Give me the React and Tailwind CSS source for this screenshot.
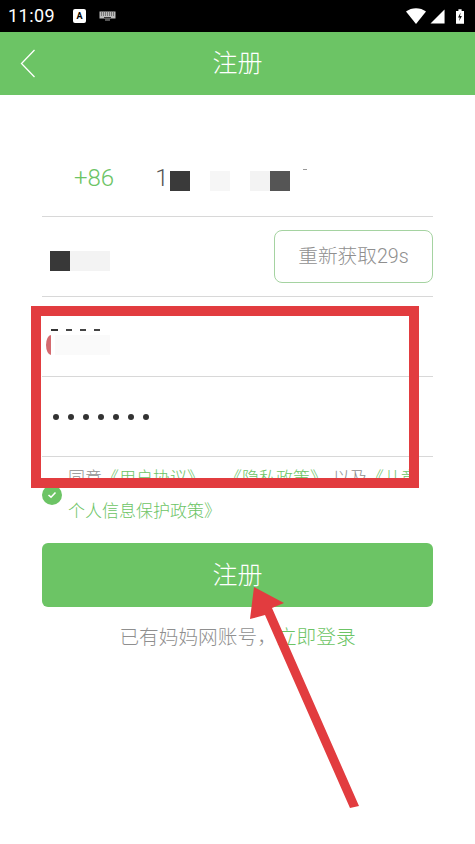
import React from "react";

const cjk = { fontFamily: '"Roboto", "Noto Sans CJK SC", sans-serif' };

function StatusBar() {
  return (
    <div className="flex h-8 items-center bg-black pl-2 pr-2 text-white">
      <span className="text-[18px] leading-none tracking-wide">11:09</span>
      <div className="ml-[18px] flex h-[14px] w-[13px] items-center justify-center rounded-[2px] bg-white text-[9px] font-bold leading-none text-black">
        A
      </div>
      <svg className="ml-[13px]" width="17" height="10" viewBox="0 0 17 10">
        <rect x="0.5" y="0.5" width="16" height="7" fill="#bbb" />
        <path d="M2 2h13M2 4h13" stroke="#333" strokeWidth="1" strokeDasharray="1 1" />
        <rect x="5" y="6" width="7" height="1" fill="#333" />
        <rect x="6" y="8.5" width="5" height="1" fill="#aaa" />
      </svg>
      <div className="ml-auto flex items-center">
        <svg width="20" height="16" viewBox="0 0 22 16" preserveAspectRatio="none">
          <path d="M0 3.5C6 -1 16 -1 22 3.5L11 16z" fill="#fff" />
        </svg>
        <svg className="ml-[4px]" width="15" height="15" viewBox="0 0 16 16">
          <path d="M15.5 0.5V15.5H0.5z" fill="#fff" />
        </svg>
        <svg className="ml-[11px] mr-[3px]" width="8" height="17" viewBox="0 0 10 18">
          <path d="M3 0h4v2h3v16H0V2h3z" fill="#fff" />
          <path d="M5.8 4L2.5 10.2h2.2L3.8 15l3.6-6.6H5z" fill="#111" />
        </svg>
      </div>
    </div>
  );
}

function Header() {
  return (
    <div className="relative flex h-[63px] items-center justify-center bg-[#6cc465] text-white">
      <svg className="absolute left-[20px] top-[17px]" width="16" height="29" viewBox="0 0 16 29" fill="none">
        <path d="M14.5 1L1.5 14.5L14.5 28" stroke="#fff" strokeWidth="1.3" />
      </svg>
      <span className="text-[25px] font-light leading-none">注册</span>
    </div>
  );
}

function Blur({ w, color, className = "" }) {
  return <div className={`h-5 ${className}`} style={{ width: w, background: color }} />;
}

export default function App() {
  return (
    <div className="relative h-[844px] w-[475px] overflow-hidden bg-white" style={cjk}>
      <StatusBar />
      <Header />

      <div className="px-[42px] pt-[42px]">
        {/* phone */}
        <div className="flex h-[80px] items-center border-b border-[#d8d8d8]">
          <span className="ml-[32px] mt-[2px] text-[24px] font-light leading-none text-[#6cc465]">+86</span>
          <span className="ml-[41px] mt-[2px] w-[15px] text-[24px] font-light leading-none text-[#555]">1</span>
          <Blur w={20} color="#3a3a3a" className="mt-2" />
          <Blur w={20} color="#ffffff" className="mt-2" />
          <Blur w={20} color="#f6f6f6" className="mt-2" />
          <Blur w={20} color="#ffffff" className="mt-2" />
          <Blur w={20} color="#f3f3f3" className="mt-2" />
          <Blur w={20} color="#555555" className="mt-2" />
          <div className="mb-[14px] ml-[13px] h-px w-1 bg-[#999]" />
        </div>

        {/* sms code */}
        <div className="flex h-[80px] items-center border-b border-[#d8d8d8]">
          <Blur w={20} color="#383838" className="ml-2 mt-2" />
          <Blur w={40} color="#f3f3f3" className="mt-2" />
          <div className="ml-auto flex h-[53px] w-[159px] items-center justify-center rounded-[8px] border border-[#a5d3a1] text-[19.7px] font-light leading-none text-[#8f8f8f]">
            重新获取29s
          </div>
        </div>

        {/* new password */}
        <div className="flex h-[80px] flex-col border-b border-[#d8d8d8] pl-[4px] pt-[32px]">
          <div className="ml-[5px] flex h-[2px] w-[50px] gap-[8px]">
            <div className="h-[2px] w-[7px] bg-[#333]" />
            <div className="h-[2px] w-[6px] bg-[#444]" />
            <div className="h-[2px] w-[6px] bg-[#444]" />
            <div className="h-[2px] w-[6px] bg-[#444]" />
          </div>
          <div className="mt-[4px] flex">
            <div className="h-5 w-[5px] rounded-bl-[5px_10px] rounded-tl-[5px_10px] bg-[#d46a6f]" />
            <div className="ml-[4px] h-5 w-[55px] bg-[#fafafa]" />
          </div>
        </div>

        {/* password */}
        <div className="flex h-[80px] items-center gap-[9px] border-b border-[#d8d8d8] pl-[11px]">
          {[0, 1, 2, 3, 4, 5, 6].map((i) => (
            <div key={i} className="h-[6px] w-[6px] rounded-full bg-[#333]" />
          ))}
        </div>

        {/* agreement */}
        <div className="relative pl-[26px] pt-[5px] text-[17px] font-light leading-[33px] text-[#6cc465]">
          <div className="absolute left-0 top-[28px] flex h-5 w-5 items-center justify-center rounded-full bg-[#6cc465]">
            <svg width="10" height="8" viewBox="0 0 10 8" fill="none">
              <path d="M1.5 4L4 6.2L8.5 1.5" stroke="#fff" strokeWidth="1.6" />
            </svg>
          </div>
          <div className="h-[33px] whitespace-nowrap">
            <span className="text-[#8f8f8f]">同意</span>《用户协议》
            <span className="inline-block w-[21px]" />
            《隐私政策》<span className="ml-[6px] text-[#8f8f8f]">以及</span>《儿童
          </div>
          <div>个人信息保护政策》</div>
        </div>

        <button className="mt-[15px] flex h-[64px] w-full items-center justify-center rounded-[6px] bg-[#6cc465] text-[25px] font-light leading-none text-white">
          注册
        </button>

        <div className="mt-[19px] text-center text-[19.7px] font-light leading-[24px] text-[#8f8f8f]">
          已有妈妈网账号，<span className="text-[#6cc465]">立即登录</span>
        </div>
      </div>

      {/* red annotations on top of the screenshot */}
      <div className="absolute left-[31px] top-[306px] h-[182px] w-[388px] border-[10px] border-[#e23c3f]" />
      <svg className="absolute left-[240px] top-[580px]" width="130" height="240" viewBox="0 0 130 240">
        <path d="M14 7L44 23L32 28L119 226L110 228L25 35L10 39z" fill="#e23c3f" />
      </svg>
    </div>
  );
}
